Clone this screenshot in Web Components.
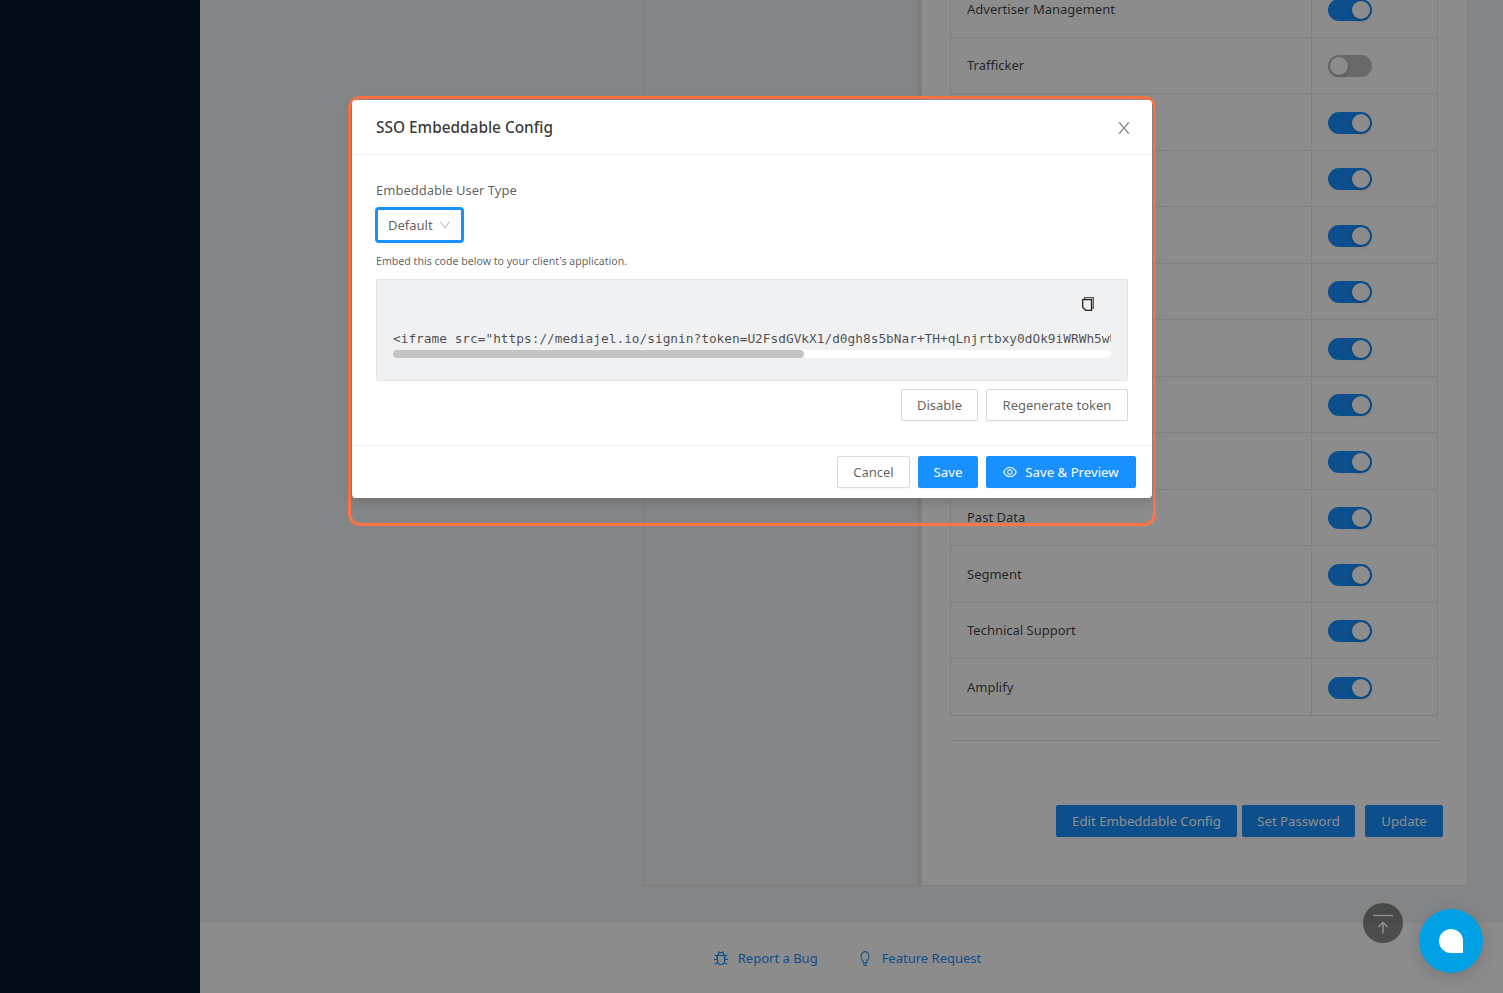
<!DOCTYPE html>
<html>

<head>
    <title>SSO Embeddable Config</title>
    <style>
        html, body { margin: 0; height: 993px; overflow: hidden; }
        body { font-family: "Noto Sans", "Liberation Sans", sans-serif; font-size: 13px; }
    </style>
</head>

<body>
    <app-page>
        <perm-row slot="rows" label="Advertiser Management" on></perm-row>
        <perm-row slot="rows" label="Trafficker"></perm-row>
        <perm-row slot="rows" label="" on></perm-row>
        <perm-row slot="rows" label="" on></perm-row>
        <perm-row slot="rows" label="" on></perm-row>
        <perm-row slot="rows" label="" on></perm-row>
        <perm-row slot="rows" label="" on></perm-row>
        <perm-row slot="rows" label="" on></perm-row>
        <perm-row slot="rows" label="" on></perm-row>
        <perm-row slot="rows" label="Past Data" on></perm-row>
        <perm-row slot="rows" label="Segment" on></perm-row>
        <perm-row slot="rows" label="Technical Support" on></perm-row>
        <perm-row slot="rows" label="Amplify" on></perm-row>

        <ant-btn slot="actions" kind="primary" style="width:181px">Edit Embeddable Config</ant-btn>
        <ant-btn slot="actions" kind="primary" style="width:113px;margin-left:5px">Set Password</ant-btn>
        <ant-btn slot="actions" kind="primary" style="width:78px;margin-left:10px">Update</ant-btn>
    </app-page>

    <sso-modal>
        <span slot="title">SSO Embeddable Config</span>
        <code-box slot="code"></code-box>
        <ant-btn slot="code-actions" style="width:77px">Disable</ant-btn>
        <ant-btn slot="code-actions" style="width:142px">Regenerate token</ant-btn>
        <ant-btn slot="footer" style="width:73px">Cancel</ant-btn>
        <ant-btn slot="footer" kind="primary" style="width:60px">Save</ant-btn>
        <ant-btn slot="footer" kind="primary" style="width:150px">
            <svg viewBox="64 64 896 896" width="14" height="14" fill="currentColor" style="margin-right:8px">
                <path d="M942.2 486.2C847.4 286.5 704.1 186 512 186c-192.2 0-335.4 100.5-430.2 300.3a60.3 60.3 0 000 51.5C176.6 737.5 319.9 838 512 838c192.2 0 335.4-100.5 430.2-300.3 7.7-16.2 7.7-35 0-51.5zM512 766c-161.3 0-279.4-81.8-362.7-254C232.6 339.8 350.7 258 512 258c161.3 0 279.4 81.8 362.7 254C791.5 684.2 673.4 766 512 766zm-4-430c-97.2 0-176 78.8-176 176s78.8 176 176 176 176-78.8 176-176-78.8-176-176-176zm0 288c-61.9 0-112-50.1-112-112s50.1-112 112-112 112 50.1 112 112-50.1 112-112 112z"/>
            </svg>Save &amp; Preview
        </ant-btn>
    </sso-modal>

    <chat-launcher></chat-launcher>

    <script>
        // Button, default or primary
        class AntBtn extends HTMLElement {
            constructor() {
                super();
                this.attachShadow({ mode: 'open' });
                this.shadowRoot.innerHTML = `
                    <style>
                        :host {
                            display: inline-flex;
                            align-items: center;
                            justify-content: center;
                            box-sizing: border-box;
                            height: 32px;
                            border: 1px solid #d9d9d9;
                            border-radius: 2px;
                            background: #fff;
                            color: rgba(0, 0, 0, .65);
                            font-size: 13px;
                            white-space: nowrap;
                            box-shadow: 0 2px 0 rgba(0, 0, 0, .015);
                        }
                        :host([kind="primary"]) {
                            background: #1890ff;
                            border-color: #1890ff;
                            color: #fff;
                            font-size: 13.2px;
                        }
                    </style>
                    <slot></slot>`;
            }
        }
        customElements.define('ant-btn', AntBtn);

        // One row of the permissions table
        class PermRow extends HTMLElement {
            constructor() {
                super();
                this.attachShadow({ mode: 'open' });
                const on = this.hasAttribute('on');
                this.shadowRoot.innerHTML = `
                    <style>
                        :host {
                            display: grid;
                            grid-template-columns: 361px 1fr;
                            height: 56.5px;
                            box-sizing: border-box;
                            border-bottom: 1px solid #e8e8e8;
                            color: rgba(0, 0, 0, .75);
                            font-size: 13px;
                        }
                        .label { padding: 0 0 0 16px; display: flex; align-items: center; border-right: 1px solid #e8e8e8; }
                        .cell { padding-left: 16px; display: flex; align-items: center; }
                        .switch {
                            width: 44px;
                            height: 22px;
                            border-radius: 11px;
                            background: ${on ? '#1890ff' : 'rgba(0,0,0,.25)'};
                            display: flex;
                            justify-content: ${on ? 'flex-end' : 'flex-start'};
                            padding: 2px;
                            box-sizing: border-box;
                            margin-top: 2px;
                        }
                        .knob { width: 18px; height: 18px; border-radius: 50%; background: #fff; box-shadow: 0 2px 4px rgba(0, 35, 11, .2); }
                    </style>
                    <div class="label">${this.getAttribute('label') || ''}</div>
                    <div class="cell"><div class="switch"><div class="knob"></div></div></div>`;
            }
        }
        customElements.define('perm-row', PermRow);

        // Page behind the dialog: side bar, cards, footer, grey mask
        class AppPage extends HTMLElement {
            constructor() {
                super();
                this.attachShadow({ mode: 'open' });
                this.shadowRoot.innerHTML = `
                    <style>
                        :host { display: flex; width: 1503px; height: 993px; position: relative; overflow: hidden; background: #f0f2f5; }
                        .side { width: 200px; flex: none; background: #001529; }
                        .main { flex: 1; display: flex; flex-direction: column; min-width: 0; }
                        .content { height: 923px; flex: none; display: flex; padding-left: 443px; box-sizing: border-box; overflow: hidden; }
                        .left { width: 275px; height: 886px; flex: none; box-sizing: border-box; border: 1px solid #e3e3e3; border-top: 0; }
                        .right {
                            width: 547px; height: 886px; flex: none; margin-left: 3px; box-sizing: border-box;
                            background: #fff; border: 1px solid #e8e8e8; border-top: 0;
                            padding-left: 28px; overflow: hidden;
                            box-shadow: -3px 0 0 rgba(0, 0, 0, .05);
                        }
                        .table { width: 488px; margin-top: -19px; box-sizing: border-box; border: 1px solid #e8e8e8; border-top: 0; border-bottom: 0; }
                        hr { width: 490px; margin: 24px 0 0 0; border: 0; border-top: 1px solid #e8e8e8; }
                        .actions { display: flex; justify-content: flex-end; width: 493px; margin-top: 64px; }
                        .foot { flex: 1; background: #fff; display: flex; justify-content: center; align-items: center; gap: 41px; color: #1890ff; padding-right: 8px; font-size: 13px; }
                        .link { display: flex; align-items: center; gap: 10px; }
                        .link + .link { gap: 11px; }
                        svg { display: block; }
                        .top {
                            position: absolute; left: 1363px; top: 903px; width: 40px; height: 40px;
                            border-radius: 50%; background: rgba(0, 0, 0, .45);
                        }
                        .mask { position: absolute; inset: 0; background: rgba(0, 0, 0, .45); }
                    </style>
                    <div class="side"></div>
                    <div class="main">
                        <div class="content">
                            <div class="left"></div>
                            <div class="right">
                                <div class="table"><slot name="rows"></slot></div>
                                <hr>
                                <div class="actions"><slot name="actions"></slot></div>
                            </div>
                        </div>
                        <div class="foot">
                            <div class="link">
                                <svg width="14" height="15" viewBox="0 0 14 15" fill="none" stroke="currentColor" stroke-width="1.2">
                                    <path d="M4 4.500C4 2.800 5.300 1.500 7 1.500s3 1.300 3 3"/>
                                    <path d="M3.400 4.500h7.200v5.300c0 2.100-1.600 3.700-3.600 3.700s-3.600-1.600-3.600-3.700z"/>
                                    <path d="M3.400 8.300H0M10.600 8.300H14M.8 3.800l2.600 1.700M13.200 3.800l-2.600 1.700M.8 13.200l3-1.800M13.200 13.200l-3-1.800M4.600.3l.9 1.500M9.400.3l-.9 1.500"/>
                                </svg>
                                <span>Report a Bug</span>
                            </div>
                            <div class="link">
                                <svg viewBox="64 64 896 896" width="12" height="15" preserveAspectRatio="none" fill="currentColor">
                                    <path d="M632 888H392c-4.4 0-8 3.6-8 8v32c0 17.7 14.3 32 32 32h192c17.7 0 32-14.3 32-32v-32c0-4.4-3.6-8-8-8zM512 64c-181.1 0-328 146.9-328 328 0 121.4 66 227.4 164 284.1V792c0 17.7 14.3 32 32 32h264c17.7 0 32-14.3 32-32V676.1c98-56.7 164-162.7 164-284.1 0-181.1-146.9-328-328-328zm127.9 549.8L604 634.6V752H420V634.6l-35.9-20.8C305.4 568.3 256 484.500 256 392c0-141.4 114.6-256 256-256s256 114.6 256 256c0 92.500-49.4 176.3-128.1 221.8z"/>
                                </svg>
                                <span>Feature Request</span>
                            </div>
                        </div>
                    </div>
                    <div class="top">
                        <svg width="40" height="40" viewBox="0 0 40 40" fill="none" stroke="#fff" stroke-width="1.6">
                            <path d="M10 12.500h20M20 30.500V19.500M15.500 24l4.500-4.500 4.500 4.500"/>
                        </svg>
                    </div>
                    <div class="mask"></div>`;
            }
        }
        customElements.define('app-page', AppPage);

        // Grey box with the embed code, its copy icon and scroll bar
        class CodeBox extends HTMLElement {
            constructor() {
                super();
                this.attachShadow({ mode: 'open' });
                const code = '<iframe src="https://mediajel.io/signin?token=U2FsdGVkX1/d0gh8s5bNar+TH+qLnjrtbxy0dOk9iWRWh5wU8sYp2nQm4ZkFv7LtRc3"></iframe>';
                this.shadowRoot.innerHTML = `
                    <style>
                        :host {
                            display: block;
                            box-sizing: border-box;
                            height: 102px;
                            padding: 17px 16px 0;
                            background: #f0f1f3;
                            border: 1px solid #e3e4e6;
                            border-radius: 2px;
                        }
                        .icon { display: flex; justify-content: flex-end; padding-right: 17px; height: 33px; }
                        .code {
                            font-family: "DejaVu Sans Mono", "Liberation Mono", monospace;
                            font-size: 12.8px;
                            line-height: 17px;
                            color: rgba(0, 0, 0, .7);
                            white-space: pre;
                            overflow: hidden;
                        }
                        .track { height: 8px; margin-top: 3px; border-radius: 4px; background: #fff; }
                        .thumb { width: 411px; height: 8px; border-radius: 4px; background: #c4c4c4; }
                    </style>
                    <div class="icon">
                        <svg width="12" height="14" viewBox="0 0 12 14" fill="none" stroke="#222" stroke-width="1.3">
                            <path d="M2.500 2V.7h8.800v10.500h-1.800" stroke="#555"/>
                            <path d="M.7 2.700h8.800v10.600H3.700l-3-3z" fill="#f0f1f3"/>
                        </svg>
                    </div>
                    <div class="code"></div>
                    <div class="track"><div class="thumb"></div></div>`;
                this.shadowRoot.querySelector('.code').textContent = code;
            }
        }
        customElements.define('code-box', CodeBox);

        // The dialog, with the orange outline round it
        class SsoModal extends HTMLElement {
            constructor() {
                super();
                this.attachShadow({ mode: 'open' });
                this.shadowRoot.innerHTML = `
                    <style>
                        :host { display: block; position: absolute; left: 352px; top: 100px; width: 800px; color: rgba(0, 0, 0, .65); font-size: 13px; }
                        .ring {
                            position: absolute; left: -4px; top: -4px; width: 808px; height: 430px;
                            box-sizing: border-box; border: 3px solid #ff7345; border-radius: 12px; pointer-events: none;
                        }
                        .box { position: relative; background: #fff; border-radius: 4px; box-shadow: 0 4px 12px rgba(0, 0, 0, .15); }
                        header {
                            height: 55px; box-sizing: border-box; padding: 0 24px; display: flex; align-items: center; justify-content: space-between;
                            border-bottom: 1px solid #f0f0f0; font-size: 15.4px; font-weight: 500; color: rgba(0, 0, 0, .8);
                        }
                        .body { padding: 24px 24px 24px; }
                        .label { line-height: 22px; }
                        .select {
                            display: flex; align-items: center; justify-content: space-between; box-sizing: border-box;
                            width: 89px; height: 36px; margin: 6px 0 0 -1px; padding: 0 10px 0 10px;
                            border: 3px solid #1890ff; border-radius: 4px;
                        }
                        .hint { font-size: 10.6px; line-height: 14px; margin: 11px 0 11px; }
                        .code-actions { display: flex; justify-content: flex-end; gap: 8px; margin-top: 8px; }
                        footer { border-top: 1px solid #f0f0f0; padding: 10px 16px; display: flex; justify-content: flex-end; gap: 8px; }
                        svg { display: block; }
                    </style>
                    <div class="ring"></div>
                    <div class="box">
                        <header>
                            <slot name="title"></slot>
                            <svg viewBox="64 64 896 896" width="16" height="16" fill="rgba(0,0,0,.45)" style="margin:2px -4px 0 0">
                                <path d="M563.8 512l262.5-312.9c4.4-5.2.7-13.1-6.1-13.1h-79.8c-4.7 0-9.2 2.1-12.3 5.7L511.6 449.8 295.1 191.7c-3-3.6-7.5-5.7-12.3-5.7H203c-6.8 0-10.5 7.9-6.1 13.1L459.4 512 196.9 824.9A7.95 7.95 0 00203 838h79.8c4.7 0 9.2-2.1 12.3-5.7l216.5-258.1 216.5 258.1c3 3.6 7.5 5.7 12.3 5.7h79.8c6.8 0 10.5-7.9 6.1-13.1L563.8 512z"/>
                            </svg>
                        </header>
                        <div class="body">
                            <div class="label">Embeddable User Type</div>
                            <div class="select">
                                <span>Default</span>
                                <svg viewBox="64 64 896 896" width="12" height="12" fill="rgba(0,0,0,.25)">
                                    <path d="M884 256h-75c-5.100 0-9.900 2.500-12.900 6.600L512 654.200 227.900 262.600c-3-4.100-7.800-6.600-12.900-6.600h-75c-6.500 0-10.300 7.400-6.500 12.700l352.600 486.100c12.800 17.600 39 17.600 51.700 0l352.600-486.100c3.900-5.300.1-12.700-6.400-12.700z"/>
                                </svg>
                            </div>
                            <div class="hint">Embed this code below to your client's application.</div>
                            <slot name="code"></slot>
                            <div class="code-actions"><slot name="code-actions"></slot></div>
                        </div>
                        <footer><slot name="footer"></slot></footer>
                    </div>`;
            }
        }
        customElements.define('sso-modal', SsoModal);

        // Round chat button, bottom right
        class ChatLauncher extends HTMLElement {
            constructor() {
                super();
                this.attachShadow({ mode: 'open' });
                this.shadowRoot.innerHTML = `
                    <style>
                        :host {
                            position: absolute; left: 1419px; top: 909px; width: 64px; height: 64px; border-radius: 50%;
                            background: #00a1e4; display: flex; align-items: center; justify-content: center;
                            box-shadow: 0 4px 16px rgba(0, 0, 0, .15);
                        }
                        .bubble { width: 24px; height: 24px; background: #fff; border-radius: 50% 50% 0 50%; }
                    </style>
                    <div class="bubble"></div>`;
            }
        }
        customElements.define('chat-launcher', ChatLauncher);
    </script>
</body>

</html>
